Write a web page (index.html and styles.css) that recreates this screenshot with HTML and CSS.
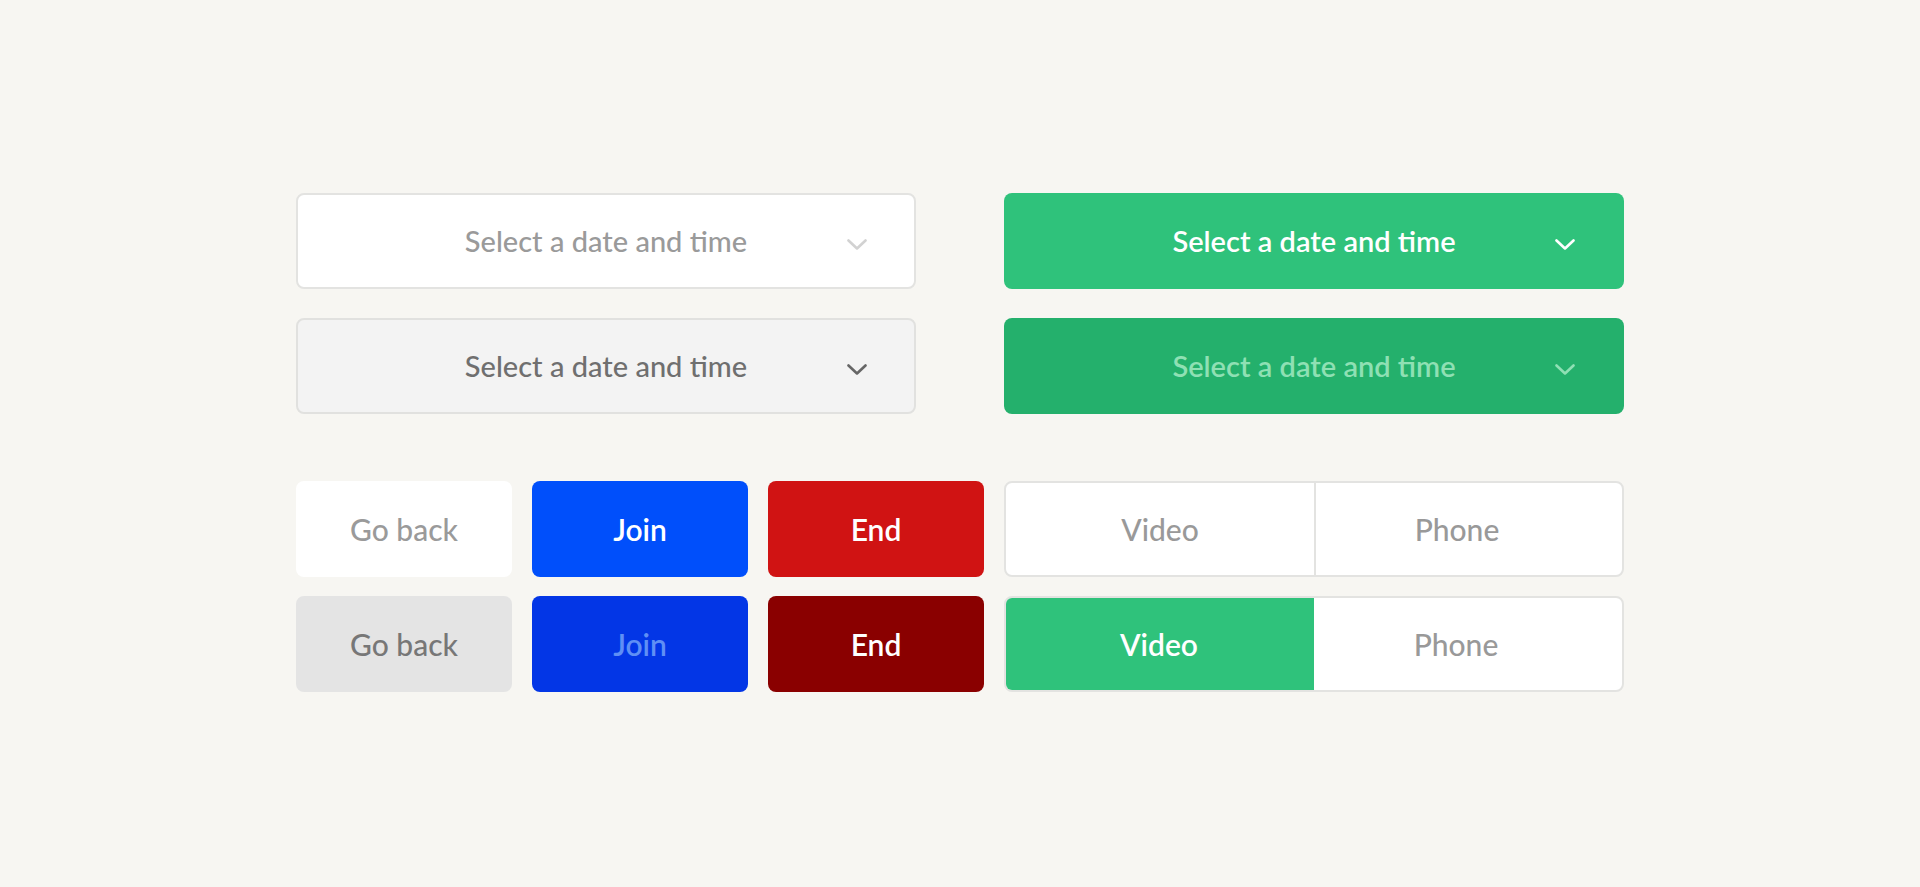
FILE: index.html
```html
<!DOCTYPE html>
<html lang="en">
<head>
    <meta charset="UTF-8">
    <title>Buttons and selects</title>
    <link rel="stylesheet" href="styles.css">
</head>
<body>
    <div class="sheet">
        <!-- Date pickers -->
        <div class="selects">
            <div class="select select-default">
                <span>Select a date and time</span>
                <svg class="chevron" viewBox="0 0 20 11"><polyline points="1.5,1.5 10,9.5 18.5,1.5"/></svg>
            </div>
            <div class="select select-green">
                <span>Select a date and time</span>
                <svg class="chevron" viewBox="0 0 20 11"><polyline points="1.5,1.5 10,9.5 18.5,1.5"/></svg>
            </div>
            <div class="select select-pressed">
                <span>Select a date and time</span>
                <svg class="chevron" viewBox="0 0 20 11"><polyline points="1.5,1.5 10,9.5 18.5,1.5"/></svg>
            </div>
            <div class="select select-green-pressed">
                <span>Select a date and time</span>
                <svg class="chevron" viewBox="0 0 20 11"><polyline points="1.5,1.5 10,9.5 18.5,1.5"/></svg>
            </div>
        </div>

        <!-- Buttons and toggles -->
        <div class="buttons">
            <div class="btn btn-back">Go back</div>
            <div class="btn btn-join">Join</div>
            <div class="btn btn-end">End</div>
            <div class="toggle">
                <div class="toggle-item">Video</div>
                <div class="toggle-item">Phone</div>
            </div>

            <div class="btn btn-back pressed">Go back</div>
            <div class="btn btn-join pressed">Join</div>
            <div class="btn btn-end pressed">End</div>
            <div class="toggle">
                <div class="toggle-item active">Video</div>
                <div class="toggle-item">Phone</div>
            </div>
        </div>
    </div>
</body>
</html>
```

FILE: styles.css
```css
/* Page */
body {
    margin: 0;
    background-color: #f7f6f2;
    font-family: Lato, "Open Sans", sans-serif;
}

.sheet {
    padding: 193px 0 0 296px;
}

/* Date and time selects */
.selects {
    display: grid;
    grid-template-columns: 620px 620px;
    column-gap: 88px;
    row-gap: 29px;
}

.select {
    position: relative;
    height: 96px;
    box-sizing: border-box;
    border-radius: 8px;
    display: flex;
    align-items: center;
    justify-content: center;
    font-size: 29px;
    font-weight: 500;
    border: 2px solid transparent;
}

.select span {
    margin-top: -2px;
}

.select .chevron {
    position: absolute;
    right: 47px;
    top: 44px;
    width: 20px;
    height: 11px;
    fill: none;
    stroke-width: 2.6;
    stroke-linecap: round;
    stroke-linejoin: round;
}

.select-default {
    background-color: #ffffff;
    border-color: #e3e3e1;
    color: #9a9a9a;
}

.select-default .chevron {
    stroke: #d2d2d2;
}

.select-pressed {
    background-color: #f3f3f3;
    border-color: #e1e1df;
    color: #6f6f6f;
}

.select-pressed .chevron {
    stroke: #666666;
}

.select-green {
    background-color: #2fc27b;
    color: #ffffff;
    font-weight: 600;
}

.select-green .chevron {
    stroke: #ffffff;
}

.select-green-pressed {
    background-color: #24b06c;
    color: #8fe0b4;
    font-weight: 600;
}

.select-green-pressed .chevron {
    stroke: #8fe0b4;
}

/* Buttons */
.buttons {
    display: grid;
    grid-template-columns: 216px 216px 216px 620px;
    gap: 19px 20px;
    margin-top: 67px;
}

.btn {
    height: 96px;
    border-radius: 8px;
    display: flex;
    align-items: center;
    justify-content: center;
    font-size: 30px;
    font-weight: 600;
    color: #ffffff;
}

.btn-back {
    background-color: #ffffff;
    color: #9a9a9a;
    font-weight: 500;
}

.btn-back.pressed {
    background-color: #e4e4e4;
    color: #777777;
}

.btn-join {
    background-color: #004ffb;
}

.btn-join.pressed {
    background-color: #0336e6;
    color: #5f8ff5;
}

.btn-end {
    background-color: #d01313;
}

.btn-end.pressed {
    background-color: #8a0000;
}

/* Video / phone toggle */
.toggle {
    display: flex;
    height: 96px;
    box-sizing: border-box;
    border: 2px solid #e3e3e1;
    border-radius: 8px;
    background-color: #ffffff;
    overflow: hidden;
}

.toggle-item {
    flex: 0 0 50%;
    box-sizing: border-box;
    display: flex;
    align-items: center;
    justify-content: center;
    font-size: 30px;
    font-weight: 500;
    color: #999999;
}

.toggle-item + .toggle-item {
    border-left: 2px solid #e3e3e1;
    padding-right: 24px;
}

.toggle-item.active {
    flex-basis: calc(50% + 2px);
    background-color: #2fc27b;
    color: #ffffff;
    font-weight: 600;
    margin: -2px 0 -2px -2px;
}

.toggle-item.active + .toggle-item {
    border-left: none;
}
```
